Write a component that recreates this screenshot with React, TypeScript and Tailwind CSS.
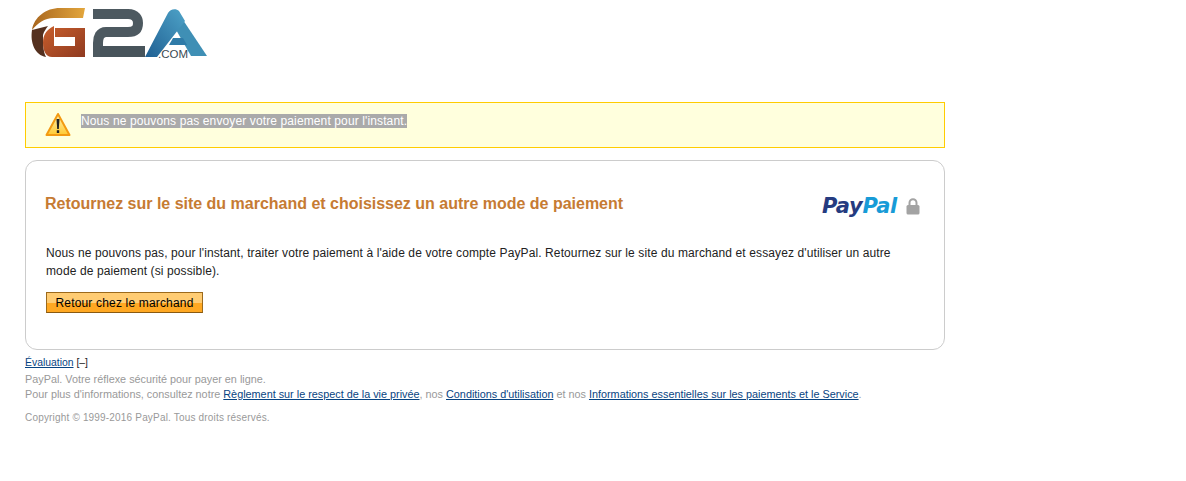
const font = "font-['Liberation_Sans',Arial,sans-serif]";

function G2aLogo() {
  return (
    <svg width="180" height="56" viewBox="0 0 180 56" fill="none" className="block">
      <defs>
        <linearGradient id="gTop" x1="0" y1="0" x2="1" y2="0">
          <stop offset="0" stopColor="#a8661f" />
          <stop offset="1" stopColor="#e3a63c" />
        </linearGradient>
        <linearGradient id="gBody" x1="0" y1="0" x2="1" y2="1">
          <stop offset="0" stopColor="#c95f2c" />
          <stop offset="1" stopColor="#8f3a20" />
        </linearGradient>
        <linearGradient id="aBody" x1="0" y1="1" x2="1" y2="0">
          <stop offset="0" stopColor="#1f5f92" />
          <stop offset="1" stopColor="#4ea3c8" />
        </linearGradient>
      </defs>
      {/* G */}
      <path d="M2 25 C0 38 5 50 16 52 C13 46 13 38 13 30 C14 26 16 24 18 21 Z" fill="#54301f" />
      <path d="M2 25 C4 12 16 3 30 3 H55 L53 13 H24 C14 13 8 18 2 25 Z" fill="url(#gTop)" />
      <path
        d="M13 38 C13 30 16 25 24 21 V41 H45 V32 H25 V23 H55 V52 H22 C16 52 13 46 13 38 Z"
        fill="url(#gBody)"
      />
      {/* 2 */}
      <path d="M63 9 H98 C106 9 108 14 108 18 C108 24 105 27 98 27 H76 C70 27 68 32 68 38 V52" stroke="#4d5960" strokeWidth="10" />
      <path d="M70 46.5 H115" stroke="#48545b" strokeWidth="11" />
      {/* A */}
      <path d="M147 6 L177 51 H161 L141 16 Z" fill="#3f8fb5" />
      <path d="M115 52 L138 8 C140 4 146 3 149 6 L155 16 L127 52 Z" fill="url(#aBody)" />
      <path d="M143 33 H153 L157 40 H139 Z" fill="#2f7ba8" />
      <text x="128" y="52.5" fontFamily="'Liberation Sans', Arial, sans-serif" fontSize="11.5" fill="#3b4a52">
        .COM
      </text>
    </svg>
  );
}

function WarningIcon() {
  return (
    <svg width="26" height="26" viewBox="0 0 26 26" className="shrink-0">
      <defs>
        <linearGradient id="warn" x1="0" y1="0" x2="0" y2="1">
          <stop offset="0" stopColor="#fff3b0" />
          <stop offset="1" stopColor="#ffc933" />
        </linearGradient>
      </defs>
      <path d="M13 2 L24.5 23 H1.5 Z" fill="url(#warn)" stroke="#f39a12" strokeWidth="2" strokeLinejoin="round" />
      <path d="M11.5 7 H14.5 L13.8 17 H12.2 Z" fill="#222" />
      <rect x="11.8" y="18.2" width="2.4" height="2.8" fill="#222" />
    </svg>
  );
}

function LockIcon() {
  return (
    <svg width="14" height="17" viewBox="0 0 14 17">
      <path d="M3.5 7 V4.8 a3.5 3.5 0 0 1 7 0 V7" fill="none" stroke="#a3a3a3" strokeWidth="2" />
      <rect x="0.5" y="7" width="13" height="9.5" rx="1.5" fill="#a3a3a3" />
    </svg>
  );
}

export default function App() {
  return (
    <div className={`${font} min-h-[481px] bg-white pl-[25px] text-[12px] text-[#333]`}>
      <div className="w-[920px]">
        <div className="h-[102px] pl-[5px] pt-[5px]">
          <G2aLogo />
        </div>

        <div className="flex h-[46px] border border-[#ffcc00] bg-[#ffffdd] pl-[19px] pt-[9px]">
          <WarningIcon />
          <div className="ml-[10px] pt-[1px] leading-[16px] tracking-[0.12px]">
            <span className="bg-[#aaaaaa] text-white">Nous ne pouvons pas envoyer votre paiement pour l'instant.</span>
          </div>
        </div>

        <div className="mt-[12px] h-[190px] rounded-[12px] border border-[#cccccc] px-[20px]">
          <div className="flex items-start justify-between pt-[33px]">
            <h1 className="-ml-[1px] text-[16px] font-bold leading-[20px] tracking-[-0.01px] text-[#c67b33]">
              Retournez sur le site du marchand et choisissez un autre mode de paiement
            </h1>
            <div className="mr-[4px] flex items-center gap-[9px]">
              <span className="font-['DejaVu_Sans',sans-serif] text-[21px] font-bold italic leading-[24px] tracking-[-0.3px] text-[#253b80]">
                Pay<span className="text-[#179bd7]">Pal</span>
              </span>
              <LockIcon />
            </div>
          </div>
          <p className="mt-[26px] w-[860px] text-[12px] leading-[18px] tracking-[0.11px] text-[#222]">
            Nous ne pouvons pas, pour l'instant, traiter votre paiement à l'aide de votre compte PayPal. Retournez sur le site du marchand et essayez d'utiliser un autre mode de paiement (si possible).
          </p>
          <button
            type="button"
            className="mt-[12px] block h-[21px] w-[157px] border border-[#9c6a1c] border-b-[#8a5a10] bg-[linear-gradient(#ffcc73_0%,#ffcc73_50%,#ffa822_50%,#ffa822_100%)] text-center text-[12px] leading-[18px] tracking-[0.17px] text-black"
          >
            Retour chez le marchand
          </button>
        </div>

        <div className="mt-[5px] text-[10.83px] leading-[16px] text-[#999]">
          <div className="text-[10.4px] text-[#222]">
            <a className="text-[#084482] underline">Évaluation</a> [–]
          </div>
          <div>PayPal. Votre réflexe sécurité pour payer en ligne.</div>
          <div className="-mt-[1px]">
            Pour plus d'informations, consultez notre{" "}
            <a className="text-[#084482] underline">Règlement sur le respect de la vie privée</a>, nos{" "}
            <a className="text-[#084482] underline">Conditions d'utilisation</a> et nos{" "}
            <a className="text-[#084482] underline">Informations essentielles sur les paiements et le Service</a>.
          </div>
          <div className="mt-[8px] text-[10px] tracking-[0.18px] text-[#999]">Copyright © 1999-2016 PayPal. Tous droits réservés.</div>
        </div>
      </div>
    </div>
  );
}
